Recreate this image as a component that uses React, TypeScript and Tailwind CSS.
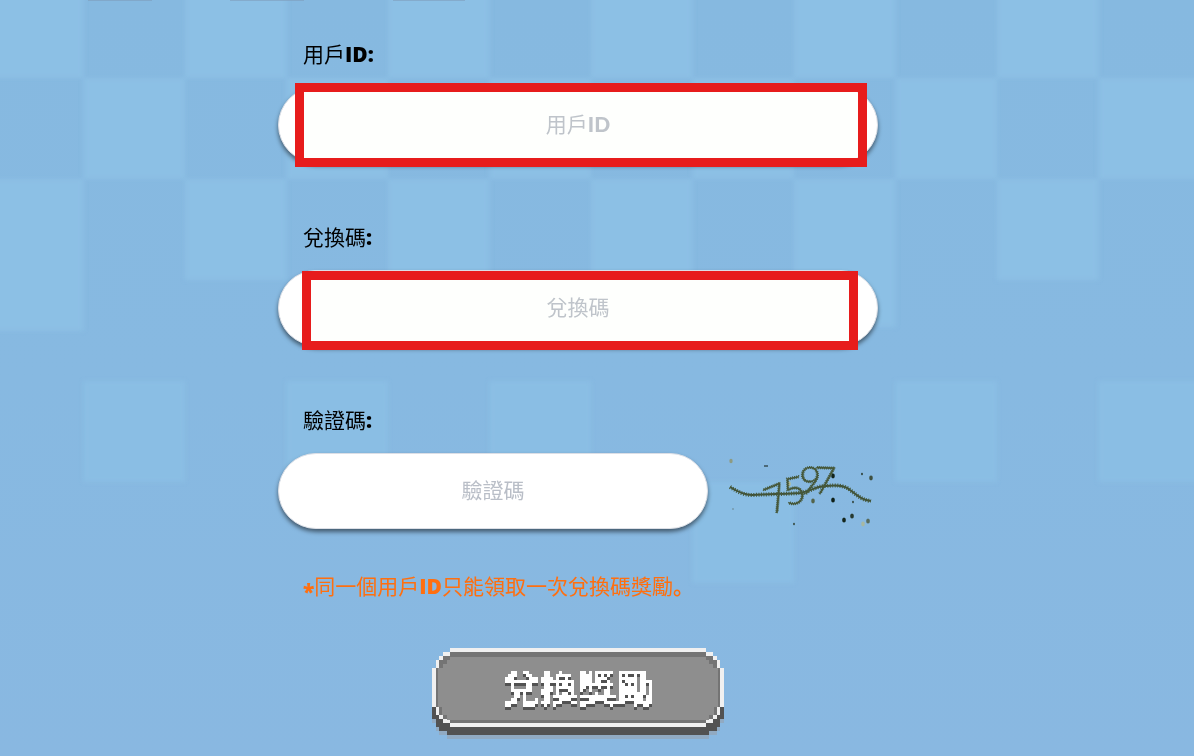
import type { ReactNode } from "react";

// [column, row, height] of the lighter squares in the sky
const skyTiles = [
	[0, 0, 101], [2, 0, 101], [4, 0, 101], [6, 0, 101], [8, 0, 101], [10, 0, 101],
	[1, 1, 101], [3, 1, 101], [5, 1, 101], [7, 1, 101], [9, 1, 101], [11, 1, 101],
	[0, 2, 152], [2, 2, 101], [4, 2, 101], [6, 2, 101], [8, 2, 148], [10, 2, 101],
	[1, 4, 101], [3, 4, 101], [5, 4, 101], [9, 4, 101], [11, 4, 101],
	[7, 5, 101],
];

function Sky() {
	return (
		<svg
			className="absolute inset-0 -z-10 h-full w-full"
			viewBox="0 0 1194 756"
			preserveAspectRatio="xMidYMin slice"
			aria-hidden="true"
		>
			<defs>
				<linearGradient id="sky" x1="0" y1="0" x2="0" y2="1">
					<stop offset="0" stopColor="#86b9e0" />
					<stop offset="0.5" stopColor="#87b9e1" />
					<stop offset="1" stopColor="#89b8e1" />
				</linearGradient>
				<filter id="soft">
					<feGaussianBlur stdDeviation="2" />
				</filter>
			</defs>
			<rect width="1194" height="756" fill="url(#sky)" />
			<g fill="#8cc0e5" filter="url(#soft)">
				{skyTiles.map(([col, row, height]) => (
					<rect
						key={`${col}-${row}`}
						x={-18 + col * 101.5}
						y={-23 + row * 101}
						width="101.5"
						height={height}
						opacity={row > 3 ? 0.7 : 0.95}
					/>
				))}
			</g>
			<g fill="#7f9dbb" opacity="0.6">
				<rect x="88" width="64" height="1" />
				<rect x="230" width="74" height="1" />
				<rect x="393" width="72" height="1" />
			</g>
		</svg>
	);
}

// [x, y, radius, colour]
const captchaDots: [number, number, number, string][] = [
	[3, 8, 2.2, "#8d9b83"],
	[37, 13, 1, "#1d2b26"],
	[39, 13, 1, "#1d2b26"],
	[61, 31, 2.4, "#b4bf9c"],
	[105, 23, 2.4, "#12241c"],
	[134, 21, 1.2, "#2b3c33"],
	[143, 25, 2.4, "#3e5040"],
	[105, 47, 2.5, "#0f2018"],
	[85, 48, 2.4, "#53644c"],
	[125, 49, 1.2, "#31433b"],
	[124, 63, 2.5, "#273a30"],
	[116, 67, 2.5, "#14261c"],
	[140, 68, 2.5, "#576b5c"],
	[135, 71, 2.4, "#a7b8a2"],
	[66, 71, 1.2, "#35483d"],
	[5, 56, 0.9, "#6b8791"],
	[49, 55, 1.1, "#4a605a"],
];

const captchaDigits = [
	{ char: "7", x: 37, y: 59, angle: -22 },
	{ char: "5", x: 55, y: 51, angle: -12 },
	{ char: "9", x: 71, y: 41, angle: 2 },
	{ char: "7", x: 86, y: 41, angle: 2 },
];

function Captcha() {
	return (
		<svg
			className="h-[76px] w-[150px] shrink-0 font-['Lato'] text-[38px] font-light"
			viewBox="0 0 150 76"
			role="img"
			aria-label="驗證碼"
		>
			{captchaDots.map(([x, y, r, color]) => (
				<ellipse key={`${x}-${y}`} cx={x} cy={y} rx={r * 0.75} ry={r} fill={color} />
			))}
			<path
				d="M2 34 C10 39 16 42 24 42 C44 41 58 41 72 40 C84 38 88 33 98 33 C108 32 116 32 122 37 C130 43 134 47 143 48"
				fill="none"
				stroke="#3e5137"
				strokeWidth="2"
			/>
			<path
				d="M2 34 C10 39 16 42 24 42 C44 41 58 41 72 40 C84 38 88 33 98 33 C108 32 116 32 122 37 C130 43 134 47 143 48"
				fill="none"
				stroke="#46583a"
				strokeWidth="4"
				strokeDasharray="1 1.5"
			/>
			{captchaDigits.map(({ char, x, y, angle }) => (
				<text
					key={x}
					x={x}
					y={y}
					transform={`rotate(${angle} ${x + 11} ${y - 14})`}
					fill="#46583a"
					stroke="#46583a"
					strokeWidth="1.5"
					strokeDasharray="1 1"
				>
					{char}
				</text>
			))}
		</svg>
	);
}

type FieldProps = {
	id: string;
	label: ReactNode;
	placeholder: string;
	mark?: ReactNode;
	aside?: ReactNode;
};

function Heavy({ children }: { children: ReactNode }) {
	return <b className="font-['Open_Sans',sans-serif] font-extrabold">{children}</b>;
}

function Field({ id, label, placeholder, mark, aside }: FieldProps) {
	return (
		<div>
			<label htmlFor={id} className="ml-[25px] block h-8 text-black">
				{label}
				<Heavy>:</Heavy>
			</label>
			<div className="mt-[17px] flex gap-5">
				<div className="relative min-w-0 flex-1">
					<input
						id={id}
						type="text"
						placeholder={placeholder}
						className="block h-[76px] w-full rounded-full border border-[#dcdfe6] bg-white px-8 pb-1 text-center font-['Lato_Black','Noto_Sans_CJK_TC',sans-serif] shadow-[0_3px_4px_rgba(0,0,0,0.5)] outline-none placeholder:text-[#b9bec7]"
					/>
					{mark}
				</div>
				{aside}
			</div>
		</div>
	);
}

// [y, height, left edge] of each step, mirrored on the right
const frameSilhouette = [
	[0, 1, 5], [1, 1, 3], [2, 1, 2], [3, 2, 1], [5, 13, 0], [18, 2, 1], [20, 1, 2], [21, 1, 4],
];
const frameWhite = [
	[0, 1, 5], [1, 1, 3], [2, 1, 2], [3, 2, 1], [5, 10, 0], [15, 2, 1], [17, 1, 2], [18, 1, 3], [19, 1, 5],
];
const frameEdge = [
	[1, 1, 5], [2, 1, 3], [3, 2, 2], [5, 10, 1], [15, 2, 2], [17, 1, 3], [18, 1, 5],
];
const frameFace = [
	[2.4, 0.6, 5], [3, 1, 4], [4, 1, 3], [5, 10, 1.7], [15, 2, 2.7], [17, 1.3, 4],
];

function Steps({ rows, fill }: { rows: number[][]; fill: string }) {
	return (
		<g fill={fill}>
			{rows.map(([y, height, left]) => (
				<rect key={y} x={left} y={y} width={80 - left * 2} height={height} />
			))}
		</g>
	);
}

function RedeemButton() {
	return (
		<button type="submit" className="relative mx-auto mt-[47px] flex h-[91px] w-[292px] justify-center pt-[11px]">
			<svg
				className="absolute inset-0 -z-10 h-full w-full"
				viewBox="0 0 80 23"
				preserveAspectRatio="none"
				shapeRendering="crispEdges"
				aria-hidden="true"
			>
				<g transform="translate(0 1)" opacity="0.8">
					<Steps rows={frameSilhouette} fill="#93a7bb" />
				</g>
				<Steps rows={frameSilhouette} fill="#525252" />
				<Steps rows={frameWhite} fill="#f0f0f0" />
				<Steps rows={frameEdge} fill="#747474" />
				<Steps rows={frameFace} fill="#8e8e8e" />
			</svg>
			{/* turns the lettering into 3px blocks with a hard shadow under it */}
			<svg className="absolute h-0 w-0" aria-hidden="true">
				<filter id="blocks" x="0" y="0" width="1" height="1.1" colorInterpolationFilters="sRGB">
					<feFlood x="1" y="1" width="1" height="1" floodColor="#fff" />
					<feComposite x="0" y="0" width="3" height="3" operator="over" in2="SourceGraphic" result="dot" />
					<feTile in="dot" result="grid" />
					<feComposite in="SourceGraphic" in2="grid" operator="in" />
					<feComponentTransfer>
						<feFuncA type="discrete" tableValues="0 1" />
					</feComponentTransfer>
					<feMorphology operator="dilate" radius="1" result="face" />
					<feOffset in="face" dy="3" />
					<feColorMatrix values="0 0 0 0 0.32  0 0 0 0 0.32  0 0 0 0 0.32  0 0 0 1 0" result="shade" />
					<feMerge>
						<feMergeNode in="shade" />
						<feMergeNode in="face" />
					</feMerge>
				</filter>
			</svg>
			<span className="text-[38px] leading-[56px] font-bold text-white [filter:url(#blocks)]">兌換獎勵</span>
		</button>
	);
}

export default function App() {
	return (
		<main className="relative isolate min-h-screen overflow-hidden bg-[#87b9e1] pr-[38px] font-['Lato','Noto_Sans_CJK_TC',sans-serif] text-[21px] leading-8">
			<Sky />
			<form
				className="mx-auto max-w-[600px] pt-[38px]"
				onSubmit={(event) => event.preventDefault()}
			>
				<div className="flex flex-col gap-[58px]">
					<Field
						id="user-id"
						label={<>用戶<Heavy>ID</Heavy></>}
						placeholder="用戶ID"
						mark={
							<span className="pointer-events-none absolute -top-1 right-[11px] -bottom-1 left-[17px] border-9 border-[#e71c1c] bg-[#f5ffe9]/10" />
						}
					/>
					<Field
						id="redeem-code"
						label="兌換碼"
						placeholder="兌換碼"
						mark={
							<span className="pointer-events-none absolute top-px right-5 -bottom-1 left-6 border-9 border-[#e71c1c] bg-[#f5ffe9]/10" />
						}
					/>
					<Field id="captcha" label="驗證碼" placeholder="驗證碼" aside={<Captcha />} />
				</div>
				<p className="mt-10 ml-[25px] h-8 text-[#ff6f0f]">
					<span className="align-sub leading-none"><Heavy>*</Heavy></span>
					同一個用戶<Heavy>ID</Heavy>只能領取一次兌換碼獎勵
					<b className="font-['Noto_Sans_CJK_JP',sans-serif] font-bold">。</b>
				</p>
				<RedeemButton />
			</form>
		</main>
	);
}
